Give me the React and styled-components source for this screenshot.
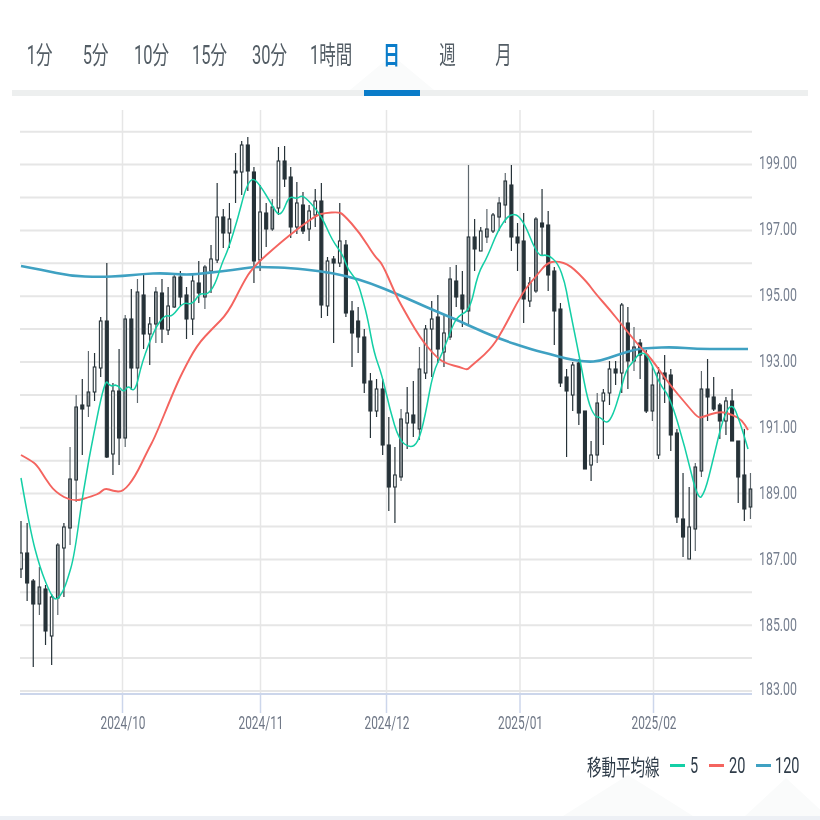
import React from 'react';
import styled, { createGlobalStyle } from 'styled-components';

const GlobalStyle = createGlobalStyle`
  html, body {
    margin: 0;
    padding: 0;
    background: #fff;
  }
`;

const Page = styled.div`
  position: relative;
  width: 820px;
  height: 820px;
  overflow: hidden;
  display: flex;
  flex-direction: column;
  background: #fff;
  font-family: Roboto, "Noto Sans CJK JP", sans-serif;
`;

const Decor = styled.div`
  position: absolute;
  left: ${(p) => p.$left}px;
  top: ${(p) => p.$top}px;
  width: ${(p) => p.$width}px;
  height: ${(p) => p.$height}px;
  background: #fafbfb;
  clip-path: polygon(0 100%, 50% 0, 100% 100%);
`;

const TabRow = styled.div`
  position: relative;
  display: flex;
  height: 90px;
  padding-left: 12px;
`;

const Tab = styled.div`
  width: ${(p) => p.$width}px;
  margin-left: ${(p) => p.$gap || 0}px;
  padding-top: 15px;
  box-sizing: border-box;
  display: flex;
  align-items: center;
  justify-content: center;
  color: ${(p) => (p.$active ? '#0a7cc9' : '#535d65')};
  font-size: 25px;
  font-weight: ${(p) => (p.$active ? 700 : 400)};
  white-space: nowrap;
`;

const TabText = styled.span`
  display: inline-block;
  transform: scaleX(0.66);
`;

const TabBar = styled.div`
  height: 6px;
  margin: 0 12px;
  background: #edefef;
`;

const TabMark = styled.div`
  width: 56px;
  height: 6px;
  margin-left: 352px;
  background: #0a7cc9;
`;

const ChartBox = styled.svg`
  display: block;
  width: 820px;
  height: 645px;
  margin-top: 4px;
  filter: blur(0.3px);
`;

const Legend = styled.div`
  display: flex;
  justify-content: flex-end;
  align-items: center;
  height: 40px;
  padding-right: 20px;
  color: #2f3c49;
  font-size: 22px;
`;

const LegendText = styled.span`
  display: inline-block;
  width: ${(p) => p.$width}px;
  margin-left: ${(p) => p.$gap}px;
  transform: scaleX(0.66);
  transform-origin: left center;
  white-space: nowrap;
`;

const Swatch = styled.span`
  width: 15px;
  height: 3px;
  margin-left: ${(p) => p.$gap}px;
  background: ${(p) => p.$color};
`;

const BottomBand = styled.div`
  margin-top: auto;
  height: 4px;
  background: #edf0f5;
`;

const TABS = [
  ['1分', 56],
  ['5分', 56],
  ['10分', 56],
  ['15分', 60],
  ['30分', 60],
  ['1時間', 62],
  ['日', 56],
  ['週', 56],
  ['月', 56],
];

// high, low, body top, body bottom (all px), kind: d = dark, h = hollow, g = hollow grey
const CANDLES = [
  [521, 578, 553, 569, 'h'], [523, 601, 553, 583, 'd'], [579, 667, 581, 604, 'd'], [567, 615, 587, 604, 'g'],
  [585, 645, 589, 631, 'd'], [594, 665, 597, 636, 'h'], [543, 615, 545, 598, 'g'], [523, 597, 527, 548, 'h'],
  [447, 545, 479, 528, 'g'], [395, 502, 407, 480, 'g'], [379, 455, 405, 409, 'd'], [351, 417, 392, 406, 'g'],
  [353, 401, 367, 392, 'h'], [317, 377, 321, 368, 'h'], [263, 458, 321, 457, 'd'], [383, 475, 391, 454, 'h'],
  [349, 465, 391, 438, 'd'], [315, 447, 319, 438, 'g'], [289, 390, 319, 368, 'd'], [279, 403, 292, 368, 'g'],
  [275, 349, 295, 334, 'd'], [317, 365, 324, 334, 'h'], [287, 343, 292, 324, 'g'], [279, 343, 293, 329, 'd'],
  [287, 335, 306, 330, 'h'], [273, 308, 277, 307, 'g'], [271, 306, 277, 297, 'd'], [287, 339, 295, 319, 'd'],
  [275, 335, 281, 319, 'h'], [261, 303, 283, 293, 'd'], [265, 309, 267, 297, 'g'], [245, 293, 259, 271, 'h'],
  [183, 263, 217, 260, 'h'], [209, 248, 217, 233, 'd'], [203, 248, 219, 233, 'h'], [153, 203, 171, 173, 'd'],
  [141, 195, 145, 172, 'h'], [137, 191, 145, 171, 'd'], [167, 283, 172, 261, 'd'], [185, 271, 212, 260, 'h'],
  [203, 247, 213, 229, 'd'], [199, 231, 207, 229, 'g'], [147, 215, 161, 208, 'h'], [146, 187, 161, 179, 'd'],
  [167, 238, 177, 227, 'd'], [182, 234, 203, 227, 'h'], [192, 234, 205, 231, 'd'], [205, 241, 211, 229, 'h'],
  [189, 227, 201, 215, 'h'], [183, 318, 201, 305, 'd'], [257, 316, 261, 306, 'h'], [256, 343, 259, 263, 'd'],
  [203, 267, 241, 263, 'h'], [240, 317, 245, 313, 'd'], [301, 367, 311, 333, 'd'], [307, 353, 321, 337, 'd'],
  [329, 393, 337, 383, 'd'], [373, 438, 381, 411, 'd'], [379, 417, 389, 411, 'h'], [379, 455, 389, 445, 'd'],
  [417, 511, 445, 487, 'd'], [447, 523, 475, 487, 'h'], [409, 481, 419, 477, 'g'], [387, 449, 413, 423, 'h'],
  [381, 437, 415, 423, 'd'], [347, 440, 369, 429, 'g'], [325, 379, 329, 373, 'h'], [301, 377, 319, 329, 'h'],
  [295, 363, 317, 349, 'd'], [315, 367, 333, 352, 'h'], [267, 340, 279, 337, 'g'], [265, 307, 281, 297, 'd'],
  [271, 327, 295, 309, 'd'], [165, 326, 237, 311, 'g'], [219, 271, 237, 249, 'd'], [227, 251, 231, 251, 'h'],
  [209, 243, 229, 237, 'g'], [213, 233, 215, 231, 'h'], [197, 231, 203, 217, 'g'], [173, 223, 181, 205, 'g'],
  [165, 251, 185, 237, 'd'], [223, 271, 237, 243, 'd'], [213, 323, 241, 299, 'd'], [277, 307, 283, 301, 'h'],
  [217, 293, 219, 291, 'g'], [189, 255, 223, 227, 'd'], [211, 291, 225, 275, 'd'], [267, 345, 271, 311, 'd'],
  [303, 387, 309, 383, 'd'], [369, 457, 377, 391, 'd'], [362, 411, 365, 395, 'h'], [359, 425, 363, 413, 'd'],
  [411, 469, 411, 469, 'd'], [441, 481, 455, 465, 'h'], [393, 463, 403, 455, 'g'], [389, 445, 393, 401, 'h'],
  [361, 405, 369, 393, 'h'], [361, 385, 369, 373, 'd'], [303, 393, 305, 373, 'h'], [307, 389, 323, 361, 'd'],
  [327, 371, 347, 361, 'g'], [339, 379, 343, 355, 'd'], [350, 413, 355, 411, 'd'], [367, 421, 385, 411, 'g'],
  [367, 459, 373, 455, 'h'], [355, 403, 373, 379, 'd'], [369, 451, 375, 435, 'd'], [429, 523, 433, 517, 'd'],
  [473, 557, 519, 537, 'd'], [487, 559, 527, 559, 'h'], [463, 551, 467, 529, 'g'], [371, 477, 389, 471, 'g'],
  [359, 421, 389, 397, 'd'], [377, 411, 397, 409, 'd'], [403, 439, 405, 421, 'd'], [397, 435, 401, 421, 'h'],
  [389, 441, 401, 441, 'd'], [441, 503, 441, 477, 'd'], [429, 521, 475, 509, 'd'], [473, 519, 489, 507, 'g'],
];

const MA5 =
  '21,478 30,530 40,568 50,593 56,601 63,592 68,578 74,557 82,500 86,477 90,453 105,378 110,387 117,384 124,393 128,385 135,393 142,362 155,328 165,315 172,317 183,302 192,305 200,293 207,295 215,285 222,263 228,250 238,218 245,190 252,177 260,185 272,205 278,215 283,212 289,196 297,199 302,195 310,202 322,217 332,240 343,255 348,270 357,280 363,300 368,320 374,353 382,375 390,410 399,440 410,448 418,443 425,417 433,372 443,352 452,327 458,316 470,310 478,273 487,258 498,230 510,213 522,217 538,257 547,254 558,263 565,283 568,300 580,360 588,402 595,417 600,417 607,424 613,415 620,393 626,370 633,362 640,352 648,355 660,385 670,397 685,447 698,501 705,492 713,460 723,418 732,402 740,422 748,449';
const MA20 =
  '21,455 30,460 37,465 45,478 55,492 73,502 93,496 100,493 105,488 113,491 123,492 135,477 148,450 155,437 173,393 182,373 197,345 213,328 228,313 243,283 253,267 280,243 300,227 317,215 325,213 338,212 343,214 360,233 375,257 382,263 395,293 400,303 420,338 437,358 447,364 460,367 467,370 470,367 490,350 502,332 522,293 537,275 547,263 557,261 570,265 587,282 595,293 610,310 622,325 640,347 650,357 670,385 687,405 698,418 703,417 720,411 733,415 742,420 748,430';
const MA120 =
  '21,266 43,270 70,276 100,277 123,276 143,274 163,273 187,275 207,273 233,270 253,267 267,267 290,268 320,271 347,276 370,283 397,294 433,310 457,320 470,326 497,338 533,350 550,354 567,359 587,362 600,361 617,355 637,349 650,348 673,347 697,349 723,349 748,349';

// rounds the corners of a point list, cutting through the midpoints
const smoothPath = (points) => {
  const pts = points.split(' ').map((p) => p.split(',').map(Number));
  let d = `M${pts[0][0]} ${pts[0][1]}`;
  for (let i = 1; i < pts.length - 1; i++) {
    const mx = (pts[i][0] + pts[i + 1][0]) / 2;
    const my = (pts[i][1] + pts[i + 1][1]) / 2;
    d += ` Q${pts[i][0]} ${pts[i][1]} ${mx} ${my}`;
  }
  const last = pts[pts.length - 1];
  return `${d} L${last[0]} ${last[1]}`;
};

const GRID_Y = Array.from({ length: 18 }, (_, i) => 131.7 + i * 32.9);
const MONTHS = [
  ['2024/10', 122.5],
  ['2024/11', 260.5],
  ['2024/12', 386.5],
  ['2025/01', 520],
  ['2025/02', 653.5],
];
const PRICES = [
  ['199.00', 168.5],
  ['197.00', 234.5],
  ['195.00', 300.5],
  ['193.00', 366.5],
  ['191.00', 432.5],
  ['189.00', 498.5],
  ['187.00', 564.5],
  ['185.00', 630.5],
  ['183.00', 694.5],
];

const Candle = ({ index, data }) => {
  const [high, low, top, bottom, kind] = data;
  const x = 21 + index * 6.13;
  const dark = '#263238';
  const wick = kind === 'g' ? '#5f686e' : dark;
  const fill = kind === 'd' ? dark : kind === 'g' ? '#9a9fa3' : '#fff';
  const width = kind === 'd' ? 3 : 2.6;
  return (
    <g>
      <line x1={x} x2={x} y1={high} y2={low} stroke={wick} strokeWidth="1.2" />
      <rect x={x - width / 2} y={top} width={width} height={bottom - top} fill={fill} stroke={dark} strokeWidth="1.1" />
    </g>
  );
};

const Chart = () => (
  <ChartBox viewBox="0 100 820 645">
    <defs>
      <clipPath id="plot">
        <rect x="20" y="100" width="740" height="594" />
      </clipPath>
    </defs>
    {MONTHS.map(([label, x]) => (
      <line key={label} x1={x} x2={x} y1="110" y2="694" stroke="#e6e6e6" strokeWidth="1.5" />
    ))}
    {GRID_Y.map((y) => (
      <line key={y} x1="20" x2="752" y1={y} y2={y} stroke="#e6e6e6" strokeWidth="2" />
    ))}
    <line x1="20" x2="752" y1="694" y2="694" stroke="#ccd6eb" strokeWidth="2" />
    {MONTHS.map(([label, x]) => (
      <line key={label} x1={x} x2={x} y1="694" y2="713" stroke="#ccd6eb" strokeWidth="1.5" />
    ))}
    <g clipPath="url(#plot)">
      {CANDLES.map((c, i) => (
        <Candle key={i} index={i} data={c} />
      ))}
    </g>
    <path d={smoothPath(MA120)} fill="none" stroke="#3fa1c2" strokeWidth="2.6" />
    <path d={smoothPath(MA20)} fill="none" stroke="#f4645f" strokeWidth="1.9" />
    <path d={smoothPath(MA5)} fill="none" stroke="#14cfa6" strokeWidth="1.5" />
    {MONTHS.map(([label, x]) => (
      <text key={label} x={x - 22} y="729" fontSize="18" fill="#6f7786" fontFamily="Roboto, sans-serif" textLength="45" lengthAdjust="spacingAndGlyphs">
        {label}
      </text>
    ))}
    {PRICES.map(([label, y]) => (
      <text key={label} x="759" y={y} fontSize="18" fill="#767f8f" fontFamily="Roboto, sans-serif" textLength="38" lengthAdjust="spacingAndGlyphs">
        {label}
      </text>
    ))}
  </ChartBox>
);

const App = () => (
  <Page>
    <GlobalStyle />
    <Decor $left={350} $top={55} $width={84} $height={35} />
    <Decor $left={563} $top={775} $width={130} $height={41} />
    <Decor $left={745} $top={778} $width={82} $height={38} />
    <TabRow>
      {TABS.map(([label, width]) => (
        <Tab key={label} $width={width} $active={label === '日'} $gap={label === '日' ? 2 : 0}>
          <TabText>{label}</TabText>
        </Tab>
      ))}
    </TabRow>
    <TabBar>
      <TabMark />
    </TabBar>
    <Chart />
    <Legend>
      <LegendText $width={72} $gap={0}>移動平均線</LegendText>
      <Swatch $gap={11} $color="#14cfa6" />
      <LegendText $width={9} $gap={5}>5</LegendText>
      <Swatch $gap={10} $color="#f4645f" />
      <LegendText $width={17} $gap={5}>20</LegendText>
      <Swatch $gap={10} $color="#3fa1c2" />
      <LegendText $width={25} $gap={4}>120</LegendText>
    </Legend>
    <BottomBand />
  </Page>
);

export default App;
